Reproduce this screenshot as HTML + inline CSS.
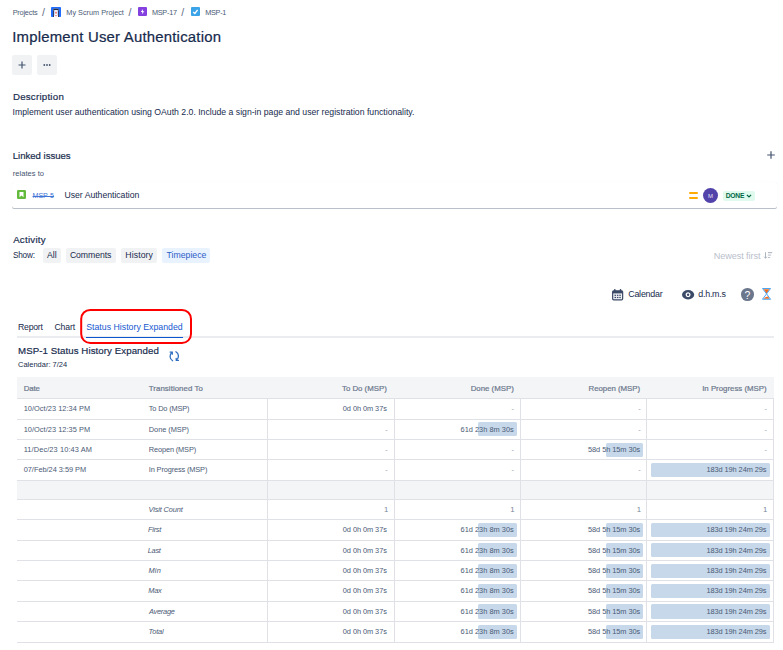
<!DOCTYPE html>
<html><head><meta charset="utf-8"><title>MSP-1</title>
<style>
*{box-sizing:border-box;margin:0;padding:0}
html,body{width:783px;height:650px;background:#fff;overflow:hidden}
body{font-family:"Liberation Sans",sans-serif;color:#172b4d;position:relative}
.t{position:absolute;white-space:nowrap}
.b{position:absolute}
svg{position:absolute;overflow:visible}
</style></head><body>
<div class="t" style="top:8px;font-size:7.3px;line-height:9px;height:9px;color:#4c5b76;left:12.70px;letter-spacing:-0.201px;">Projects</div>
<div class="t" style="top:6px;font-size:10.6px;line-height:12px;height:12px;color:#5e6c84;left:42.00px;">/</div>
<div class="t" style="top:8px;font-size:7.3px;line-height:9px;height:9px;color:#4c5b76;left:66.30px;">My Scrum Project</div>
<div class="t" style="top:6px;font-size:10.6px;line-height:12px;height:12px;color:#5e6c84;left:128.60px;">/</div>
<div class="t" style="top:8px;font-size:7.3px;line-height:9px;height:9px;color:#4c5b76;left:151.90px;letter-spacing:-0.240px;">MSP-17</div>
<div class="t" style="top:6px;font-size:10.6px;line-height:12px;height:12px;color:#5e6c84;left:181.30px;">/</div>
<div class="t" style="top:8px;font-size:7.3px;line-height:9px;height:9px;color:#4c5b76;left:205.13px;letter-spacing:-0.250px;">MSP-1</div>
<svg style="left:51px;top:7px" width="10" height="10" viewBox="0 0 10 10"><rect width="10" height="10" rx="0.8" fill="#1f6cff"/><path d="M2 10V3.200Q2 1.600 3.600 1.600H6.400Q8 1.600 8 3.200V10Z" fill="#fff"/><path d="M2 3.600V3.200Q2 1.600 3.600 1.600H6.400Q8 1.600 8 3.200V3.600Q5 2.600 2 3.600Z" fill="#1d2b4f"/><rect x="2" y="3.400" width="0.9" height="6.600" fill="#1d2b4f"/><rect x="7.100" y="3.400" width="0.9" height="6.600" fill="#1d2b4f"/><rect x="3.100" y="4" width="0.600" height="4.500" fill="#9cc3ff"/><rect x="6.300" y="4" width="0.600" height="4.500" fill="#9cc3ff"/><circle cx="5" cy="5.700" r="1.100" fill="#f0a0a0"/><circle cx="5" cy="5.800" r="0.500" fill="#e5484d"/><rect x="4.200" y="8.300" width="1.600" height="0.800" fill="#e5484d"/></svg>
<svg style="left:137.5px;top:7.4px" width="9" height="9" viewBox="0 0 9 9"><rect width="9" height="9" rx="1.1" fill="#8540e0"/><path d="M5.100 1.900L2.700 4.900H4.300L3.900 7.300L6.400 4.200H4.800Z" fill="#fff"/></svg>
<svg style="left:190.5px;top:7.4px" width="9" height="9" viewBox="0 0 9 9"><rect width="9" height="9" rx="1.1" fill="#3ba3e8"/><path d="M2.200 4.900L3.900 6.500L6.600 2.900" stroke="#fff" stroke-width="1.400" fill="none"/></svg>
<div class="t" style="top:29px;font-size:14.9px;line-height:16px;height:16px;color:#172b4d;left:12.20px;letter-spacing:0.213px;-webkit-text-stroke:0.22px #172b4d;">Implement User Authentication</div>
<div class="b" style="left:12px;top:55px;width:20px;height:20px;background:#f1f2f4;border-radius:2px"></div>
<div class="b" style="left:37px;top:55px;width:20px;height:20px;background:#f1f2f4;border-radius:2px"></div>
<svg style="left:12px;top:55px" width="20" height="20"><path d="M6.5 10H13.5M10 6.5V13.5" stroke="#44546f" stroke-width="1.2"/></svg>
<svg style="left:37px;top:55px" width="20" height="20"><circle cx="7.3" cy="10" r="0.9" fill="#44546f"/><circle cx="10" cy="10" r="0.9" fill="#44546f"/><circle cx="12.7" cy="10" r="0.9" fill="#44546f"/></svg>
<div class="t" style="top:91px;font-size:9.7px;line-height:11px;height:11px;color:#172b4d;left:12.90px;letter-spacing:0.243px;-webkit-text-stroke:0.18px #172b4d;">Description</div>
<div class="t" style="top:107px;font-size:8.7px;line-height:10px;height:10px;color:#172b4d;left:12.60px;letter-spacing:-0.007px;">Implement user authentication using OAuth 2.0. Include a sign-in page and user registration functionality.</div>
<div class="t" style="top:150px;font-size:9.6px;line-height:11px;height:11px;color:#172b4d;left:12.80px;letter-spacing:-0.028px;-webkit-text-stroke:0.18px #172b4d;">Linked issues</div>
<svg style="left:767px;top:151px" width="8" height="8"><path d="M0.2 4H7.8M4 0.2V7.8" stroke="#44546f" stroke-width="1.2"/></svg>
<div class="t" style="top:169px;font-size:7.5px;line-height:9px;height:9px;color:#44546f;left:12.80px;letter-spacing:0.036px;">relates to</div>
<div class="b" style="left:12.4px;top:182.4px;width:764.5px;height:25.4px;background:#fff;border-radius:2px;box-shadow:0 1px 0.5px rgba(9,30,66,.27),0 0 1px rgba(9,30,66,.09)"></div>
<svg style="left:17.4px;top:190.4px" width="9" height="9" viewBox="0 0 9 9"><rect width="9" height="9" rx="1.3" fill="#63ba3c"/><path d="M2.500 1.900H6.500V7.200L4.500 5.600L2.500 7.200Z" fill="#fff"/></svg>
<div class="t" style="top:192px;font-size:7.1px;line-height:8px;height:8px;color:#3f76d6;left:32.60px;letter-spacing:-0.084px;text-decoration:line-through;">MSP-5</div>
<div class="t" style="top:190px;font-size:8.7px;line-height:10px;height:10px;color:#172b4d;left:64.50px;letter-spacing:-0.027px;">User Authentication</div>
<div class="b" style="left:688.7px;top:192px;width:9.6px;height:1.8px;background:#ffab00;border-radius:1px"></div>
<div class="b" style="left:688.7px;top:197.2px;width:9.6px;height:1.8px;background:#ffab00;border-radius:1px"></div>
<div class="b" style="left:703px;top:188px;width:15px;height:15px;background:#5243aa;border-radius:50%"></div>
<div class="t" style="top:193px;font-size:6px;line-height:6px;height:6px;color:#e6e3f5;left:708.00px;">M</div>
<div class="b" style="left:723.2px;top:191.3px;width:31.7px;height:9.4px;background:#e0fbee;border-radius:2px"></div>
<div class="t" style="top:192px;font-size:6.7px;line-height:7px;height:7px;color:#006644;left:725.70px;letter-spacing:-0.220px;font-weight:bold;">DONE</div>
<svg style="left:746.3px;top:194.4px" width="6" height="4"><path d="M0.9 0.9L3 3L5.1 0.900" stroke="#006644" stroke-width="1.2" fill="none"/></svg>
<div class="t" style="top:234px;font-size:9.7px;line-height:11px;height:11px;color:#172b4d;left:13.16px;letter-spacing:0.250px;-webkit-text-stroke:0.18px #172b4d;">Activity</div>
<div class="t" style="top:251px;font-size:8.2px;line-height:9px;height:9px;color:#172b4d;left:12.90px;letter-spacing:-0.145px;">Show:</div>
<div class="b" style="left:43px;top:248.4px;width:18px;height:14.3px;background:#f1f2f4;border-radius:2px"></div>
<div class="t" style="top:250px;font-size:8.7px;line-height:10px;height:10px;color:#172b4d;left:47.10px;letter-spacing:-0.062px;">All</div>
<div class="b" style="left:66px;top:248.4px;width:50px;height:14.3px;background:#f1f2f4;border-radius:2px"></div>
<div class="t" style="top:250px;font-size:8.7px;line-height:10px;height:10px;color:#172b4d;left:69.90px;letter-spacing:-0.079px;">Comments</div>
<div class="b" style="left:121px;top:248.4px;width:36px;height:14.3px;background:#f1f2f4;border-radius:2px"></div>
<div class="t" style="top:250px;font-size:8.7px;line-height:10px;height:10px;color:#172b4d;left:125.30px;letter-spacing:0.102px;">History</div>
<div class="b" style="left:162px;top:248.4px;width:48px;height:14.3px;background:#e9f2ff;border-radius:2px"></div>
<div class="t" style="top:250px;font-size:8.7px;line-height:10px;height:10px;color:#2c5fc7;left:166.60px;">Timepiece</div>
<div class="t" style="top:251px;font-size:9.1px;line-height:10px;height:10px;color:#b9c0cb;left:713.70px;letter-spacing:-0.061px;">Newest first</div>
<svg style="left:764px;top:251.800px" width="9" height="7.200"><path d="M1.500 0.200V6.100M0.200 4.700L1.500 6.300L2.800 4.700" stroke="#a5adba" stroke-width="0.9" fill="none"/><path d="M3.900 0.700H8.200" stroke="#a5adba" stroke-width="1" fill="none"/><path d="M3.900 3.100H7.200M3.900 5.500H6.200" stroke="#b3bac5" stroke-width="0.9" fill="none"/></svg>
<svg style="left:611.6px;top:288.7px" width="11.3" height="11.5" viewBox="0 0 11.3 11.5"><rect x="0.65" y="1.9" width="10" height="8.950" rx="1.1" fill="#eef0f4" stroke="#3b4a66" stroke-width="1.2"/><rect x="0.65" y="1.900" width="10" height="2.500" fill="#3b4a66"/><rect x="2.100" y="0" width="1.400" height="2.600" rx="0.5" fill="#3b4a66"/><rect x="7.800" y="0" width="1.400" height="2.600" rx="0.5" fill="#3b4a66"/><g fill="#3b4a66"><rect x="2.500" y="5.700" width="1.500" height="1.200"/><rect x="4.900" y="5.700" width="1.500" height="1.200"/><rect x="7.300" y="5.700" width="1.500" height="1.200"/><rect x="2.500" y="7.900" width="1.500" height="1.200"/><rect x="4.900" y="7.900" width="1.500" height="1.200"/><rect x="7.300" y="7.900" width="1.500" height="1.200"/></g></svg>
<div class="t" style="top:289px;font-size:8.9px;line-height:10px;height:10px;color:#172b4d;left:628.20px;letter-spacing:-0.209px;">Calendar</div>
<svg style="left:682.3px;top:289.7px" width="12.2" height="9.6" viewBox="0 0 12.2 9.6"><ellipse cx="6.1" cy="4.8" rx="6.1" ry="4.700" fill="#3b4a66"/><circle cx="6.1" cy="4.8" r="2.500" fill="#fff"/><circle cx="6.1" cy="4.8" r="1.200" fill="#3b4a66"/></svg>
<div class="t" style="top:289px;font-size:8.9px;line-height:10px;height:10px;color:#172b4d;left:698.32px;letter-spacing:-0.250px;">d.h.m.s</div>
<div class="b" style="left:741.1px;top:288px;width:12.7px;height:12.7px;background:#6b778c;border-radius:50%"></div>
<div class="t" style="top:290px;font-size:10.4px;line-height:11px;height:11px;color:#fff;left:744.55px;">?</div>
<svg style="left:762px;top:288.1px" width="9.1" height="11.800" viewBox="0 0 9.1 11.8"><path d="M1.500 1.200H7.600L4.550 5.600Z" fill="#f26a1b"/><path d="M1.400 10.700L3.400 9.300L5.900 8.600L7.700 10.700Z" fill="#f26a1b"/><path d="M0.500 0.500H8.600L0.500 11.300H8.600Z" stroke="#4fa6ee" stroke-width="1" fill="none" stroke-linejoin="round"/></svg>
<div class="t" style="top:322px;font-size:8.7px;line-height:10px;height:10px;color:#172b4d;left:18.00px;letter-spacing:-0.232px;">Report</div>
<div class="t" style="top:322px;font-size:8.7px;line-height:10px;height:10px;color:#172b4d;left:54.40px;letter-spacing:-0.107px;">Chart</div>
<div class="t" style="top:322px;font-size:8.75px;line-height:10px;height:10px;color:#1558d0;left:86.20px;letter-spacing:0.008px;">Status History Expanded</div>
<div class="b" style="left:16.8px;top:336px;width:757.2px;height:2px;background:#ebecf0;"></div>
<div class="b" style="left:86.2px;top:336.8px;width:96.6px;height:1.4px;background:#0b55cf;"></div>
<svg style="left:79px;top:307px" width="115" height="39"><rect x="2.2" y="2.9" width="109.8" height="33.1" rx="9" fill="none" stroke="#ff0000" stroke-width="2"/></svg>
<div class="t" style="top:345px;font-size:9.7px;line-height:11px;height:11px;color:#172b4d;left:18.00px;letter-spacing:0.070px;-webkit-text-stroke:0.18px #172b4d;">MSP-1 Status History Expanded</div>
<svg style="left:169.3px;top:351.2px" width="10.5" height="10.5" viewBox="0 0 10.5 10.5"><g stroke="#2f6dc0" stroke-width="1.3" fill="none" stroke-linecap="round"><path d="M3.600 9.700C0.500 8 0.200 3.600 2.900 1.400"/><path d="M1.100 1.100L3.200 1.100L3.300 3.200"/><path d="M6.900 0.800C10 2.500 10.300 6.900 7.600 9.100"/><path d="M9.400 9.400L7.300 9.400L7.200 7.300"/></g></svg>
<div class="t" style="top:360px;font-size:7.45px;line-height:9px;height:9px;color:#172b4d;left:18.00px;letter-spacing:0.027px;">Calendar: 7/24</div>
<div class="b" style="left:17px;top:377px;width:757px;height:21px;background:#f4f5f7;"></div>
<div class="b" style="left:17px;top:481px;width:757px;height:18px;background:#f4f5f7;"></div>
<div class="b" style="left:17px;top:398px;width:757px;height:1px;background:#dfe1e6;"></div>
<div class="b" style="left:17px;top:419px;width:757px;height:1px;background:#dfe1e6;"></div>
<div class="b" style="left:17px;top:439px;width:757px;height:1px;background:#dfe1e6;"></div>
<div class="b" style="left:17px;top:459px;width:757px;height:1px;background:#dfe1e6;"></div>
<div class="b" style="left:17px;top:480px;width:757px;height:1px;background:#dfe1e6;"></div>
<div class="b" style="left:17px;top:499px;width:757px;height:1px;background:#dfe1e6;"></div>
<div class="b" style="left:17px;top:519px;width:757px;height:1px;background:#dfe1e6;"></div>
<div class="b" style="left:17px;top:540px;width:757px;height:1px;background:#dfe1e6;"></div>
<div class="b" style="left:17px;top:560px;width:757px;height:1px;background:#dfe1e6;"></div>
<div class="b" style="left:17px;top:580px;width:757px;height:1px;background:#dfe1e6;"></div>
<div class="b" style="left:17px;top:601px;width:757px;height:1px;background:#dfe1e6;"></div>
<div class="b" style="left:17px;top:621px;width:757px;height:1px;background:#dfe1e6;"></div>
<div class="b" style="left:17px;top:642px;width:757px;height:1px;background:#dfe1e6;"></div>
<div class="b" style="left:267px;top:399px;width:1px;height:244px;background:#dfe1e6;"></div>
<div class="b" style="left:394px;top:399px;width:1px;height:244px;background:#dfe1e6;"></div>
<div class="b" style="left:520px;top:399px;width:1px;height:244px;background:#dfe1e6;"></div>
<div class="b" style="left:646px;top:399px;width:1px;height:244px;background:#dfe1e6;"></div>
<div class="b" style="left:773px;top:399px;width:1px;height:244px;background:#dfe1e6;"></div>
<div class="t" style="top:384px;font-size:7.85px;line-height:9px;height:9px;color:#6b778c;left:23.70px;letter-spacing:-0.135px;-webkit-text-stroke:0.2px #6b778c;">Date</div>
<div class="t" style="top:384px;font-size:7.85px;line-height:9px;height:9px;color:#6b778c;left:148.80px;letter-spacing:0.059px;-webkit-text-stroke:0.2px #6b778c;">Transitioned To</div>
<div class="t" style="top:384px;font-size:7.85px;line-height:9px;height:9px;color:#6b778c;left:342.00px;letter-spacing:-0.008px;-webkit-text-stroke:0.2px #6b778c;">To Do (MSP)</div>
<div class="t" style="top:384px;font-size:7.85px;line-height:9px;height:9px;color:#6b778c;left:470.70px;-webkit-text-stroke:0.2px #6b778c;">Done (MSP)</div>
<div class="t" style="top:384px;font-size:7.85px;line-height:9px;height:9px;color:#6b778c;left:588.50px;letter-spacing:-0.024px;-webkit-text-stroke:0.2px #6b778c;">Reopen (MSP)</div>
<div class="t" style="top:384px;font-size:7.85px;line-height:9px;height:9px;color:#6b778c;left:702.20px;letter-spacing:-0.006px;-webkit-text-stroke:0.2px #6b778c;">In Progress (MSP)</div>
<div class="t" style="top:404px;font-size:7.4px;line-height:9px;height:9px;color:#4a5a75;left:23.70px;letter-spacing:0.037px;">10/Oct/23 12:34 PM</div>
<div class="t" style="top:404px;font-size:7.4px;line-height:9px;height:9px;color:#4a5a75;left:148.80px;letter-spacing:-0.164px;">To Do (MSP)</div>
<div class="t" style="top:404px;font-size:7.4px;line-height:9px;height:9px;color:#4a5a75;left:342.80px;letter-spacing:-0.063px;">0d 0h 0m 37s</div>
<div class="t" style="top:404px;font-size:7.4px;line-height:9px;height:9px;color:#97a0af;left:511.60px;">-</div>
<div class="t" style="top:404px;font-size:7.4px;line-height:9px;height:9px;color:#97a0af;left:638.20px;">-</div>
<div class="t" style="top:404px;font-size:7.4px;line-height:9px;height:9px;color:#97a0af;left:764.60px;">-</div>
<div class="t" style="top:425px;font-size:7.4px;line-height:9px;height:9px;color:#4a5a75;left:23.70px;letter-spacing:0.037px;">10/Oct/23 12:35 PM</div>
<div class="t" style="top:425px;font-size:7.4px;line-height:9px;height:9px;color:#4a5a75;left:148.80px;letter-spacing:-0.055px;">Done (MSP)</div>
<div class="t" style="top:425px;font-size:7.4px;line-height:9px;height:9px;color:#97a0af;left:385.20px;">-</div>
<div class="b" style="left:478px;top:422px;width:39px;height:14px;background:#c6d8ea;border-radius:1.5px"></div>
<div class="t" style="top:425px;font-size:7.4px;line-height:9px;height:9px;color:#4a5a75;left:460.60px;letter-spacing:0.007px;">61d 23h 8m 30s</div>
<div class="t" style="top:425px;font-size:7.4px;line-height:9px;height:9px;color:#97a0af;left:638.20px;">-</div>
<div class="t" style="top:425px;font-size:7.4px;line-height:9px;height:9px;color:#97a0af;left:764.60px;">-</div>
<div class="t" style="top:445px;font-size:7.4px;line-height:9px;height:9px;color:#4a5a75;left:23.70px;letter-spacing:0.107px;">11/Dec/23 10:43 AM</div>
<div class="t" style="top:445px;font-size:7.4px;line-height:9px;height:9px;color:#4a5a75;left:148.80px;letter-spacing:-0.138px;">Reopen (MSP)</div>
<div class="t" style="top:445px;font-size:7.4px;line-height:9px;height:9px;color:#97a0af;left:385.20px;">-</div>
<div class="t" style="top:445px;font-size:7.4px;line-height:9px;height:9px;color:#97a0af;left:511.60px;">-</div>
<div class="b" style="left:606px;top:443px;width:37px;height:14px;background:#c6d8ea;border-radius:1.5px"></div>
<div class="t" style="top:445px;font-size:7.4px;line-height:9px;height:9px;color:#4a5a75;left:588.00px;letter-spacing:-0.062px;">58d 5h 15m 30s</div>
<div class="t" style="top:445px;font-size:7.4px;line-height:9px;height:9px;color:#97a0af;left:764.60px;">-</div>
<div class="t" style="top:465px;font-size:7.4px;line-height:9px;height:9px;color:#4a5a75;left:23.70px;letter-spacing:-0.025px;">07/Feb/24 3:59 PM</div>
<div class="t" style="top:465px;font-size:7.4px;line-height:9px;height:9px;color:#4a5a75;left:148.80px;letter-spacing:-0.139px;">In Progress (MSP)</div>
<div class="t" style="top:465px;font-size:7.4px;line-height:9px;height:9px;color:#97a0af;left:385.20px;">-</div>
<div class="t" style="top:465px;font-size:7.4px;line-height:9px;height:9px;color:#97a0af;left:511.60px;">-</div>
<div class="t" style="top:465px;font-size:7.4px;line-height:9px;height:9px;color:#97a0af;left:638.20px;">-</div>
<div class="b" style="left:651px;top:463px;width:119px;height:13.5px;background:#c6d8ea;border-radius:1.5px"></div>
<div class="t" style="top:465px;font-size:7.4px;line-height:9px;height:9px;color:#4a5a75;left:706.40px;letter-spacing:-0.075px;">183d 19h 24m 29s</div>
<div class="t" style="top:505px;font-size:7.4px;line-height:9px;height:9px;color:#4a5a75;left:148.50px;letter-spacing:-0.135px;font-style:italic;">Visit Count</div>
<div class="t" style="top:505px;font-size:7.8px;line-height:9px;height:9px;color:#7a869a;left:383.90px;">1</div>
<div class="t" style="top:505px;font-size:7.8px;line-height:9px;height:9px;color:#7a869a;left:510.30px;">1</div>
<div class="t" style="top:505px;font-size:7.8px;line-height:9px;height:9px;color:#7a869a;left:636.70px;">1</div>
<div class="t" style="top:505px;font-size:7.8px;line-height:9px;height:9px;color:#7a869a;left:763.10px;">1</div>
<div class="t" style="top:525px;font-size:7.4px;line-height:9px;height:9px;color:#4a5a75;left:147.99px;letter-spacing:-0.250px;font-style:italic;">First</div>
<div class="t" style="top:525px;font-size:7.4px;line-height:9px;height:9px;color:#4a5a75;left:342.80px;letter-spacing:-0.063px;">0d 0h 0m 37s</div>
<div class="b" style="left:478px;top:523px;width:39px;height:14px;background:#c6d8ea;border-radius:1.5px"></div>
<div class="t" style="top:525px;font-size:7.4px;line-height:9px;height:9px;color:#4a5a75;left:460.60px;letter-spacing:0.007px;">61d 23h 8m 30s</div>
<div class="b" style="left:606px;top:523px;width:37px;height:14px;background:#c6d8ea;border-radius:1.5px"></div>
<div class="t" style="top:525px;font-size:7.4px;line-height:9px;height:9px;color:#4a5a75;left:588.00px;letter-spacing:-0.062px;">58d 5h 15m 30s</div>
<div class="b" style="left:651px;top:523px;width:119px;height:14px;background:#c6d8ea;border-radius:1.5px"></div>
<div class="t" style="top:525px;font-size:7.4px;line-height:9px;height:9px;color:#4a5a75;left:706.40px;letter-spacing:-0.075px;">183d 19h 24m 29s</div>
<div class="t" style="top:546px;font-size:7.4px;line-height:9px;height:9px;color:#4a5a75;left:147.67px;letter-spacing:-0.250px;font-style:italic;">Last</div>
<div class="t" style="top:546px;font-size:7.4px;line-height:9px;height:9px;color:#4a5a75;left:342.80px;letter-spacing:-0.063px;">0d 0h 0m 37s</div>
<div class="b" style="left:478px;top:543px;width:39px;height:14px;background:#c6d8ea;border-radius:1.5px"></div>
<div class="t" style="top:546px;font-size:7.4px;line-height:9px;height:9px;color:#4a5a75;left:460.60px;letter-spacing:0.007px;">61d 23h 8m 30s</div>
<div class="b" style="left:606px;top:543px;width:37px;height:14px;background:#c6d8ea;border-radius:1.5px"></div>
<div class="t" style="top:546px;font-size:7.4px;line-height:9px;height:9px;color:#4a5a75;left:588.00px;letter-spacing:-0.062px;">58d 5h 15m 30s</div>
<div class="b" style="left:651px;top:543px;width:119px;height:14px;background:#c6d8ea;border-radius:1.5px"></div>
<div class="t" style="top:546px;font-size:7.4px;line-height:9px;height:9px;color:#4a5a75;left:706.40px;letter-spacing:-0.075px;">183d 19h 24m 29s</div>
<div class="t" style="top:566px;font-size:7.4px;line-height:9px;height:9px;color:#4a5a75;left:148.50px;letter-spacing:0.201px;font-style:italic;">Min</div>
<div class="t" style="top:566px;font-size:7.4px;line-height:9px;height:9px;color:#4a5a75;left:342.80px;letter-spacing:-0.063px;">0d 0h 0m 37s</div>
<div class="b" style="left:478px;top:564px;width:39px;height:14px;background:#c6d8ea;border-radius:1.5px"></div>
<div class="t" style="top:566px;font-size:7.4px;line-height:9px;height:9px;color:#4a5a75;left:460.60px;letter-spacing:0.007px;">61d 23h 8m 30s</div>
<div class="b" style="left:606px;top:564px;width:37px;height:14px;background:#c6d8ea;border-radius:1.5px"></div>
<div class="t" style="top:566px;font-size:7.4px;line-height:9px;height:9px;color:#4a5a75;left:588.00px;letter-spacing:-0.062px;">58d 5h 15m 30s</div>
<div class="b" style="left:651px;top:564px;width:119px;height:14px;background:#c6d8ea;border-radius:1.5px"></div>
<div class="t" style="top:566px;font-size:7.4px;line-height:9px;height:9px;color:#4a5a75;left:706.40px;letter-spacing:-0.075px;">183d 19h 24m 29s</div>
<div class="t" style="top:586px;font-size:7.4px;line-height:9px;height:9px;color:#4a5a75;left:148.27px;letter-spacing:-0.250px;font-style:italic;">Max</div>
<div class="t" style="top:586px;font-size:7.4px;line-height:9px;height:9px;color:#4a5a75;left:342.80px;letter-spacing:-0.063px;">0d 0h 0m 37s</div>
<div class="b" style="left:478px;top:584px;width:39px;height:14px;background:#c6d8ea;border-radius:1.5px"></div>
<div class="t" style="top:586px;font-size:7.4px;line-height:9px;height:9px;color:#4a5a75;left:460.60px;letter-spacing:0.007px;">61d 23h 8m 30s</div>
<div class="b" style="left:606px;top:584px;width:37px;height:14px;background:#c6d8ea;border-radius:1.5px"></div>
<div class="t" style="top:586px;font-size:7.4px;line-height:9px;height:9px;color:#4a5a75;left:588.00px;letter-spacing:-0.062px;">58d 5h 15m 30s</div>
<div class="b" style="left:651px;top:584px;width:119px;height:14px;background:#c6d8ea;border-radius:1.5px"></div>
<div class="t" style="top:586px;font-size:7.4px;line-height:9px;height:9px;color:#4a5a75;left:706.40px;letter-spacing:-0.075px;">183d 19h 24m 29s</div>
<div class="t" style="top:607px;font-size:7.4px;line-height:9px;height:9px;color:#4a5a75;left:149.01px;letter-spacing:-0.250px;font-style:italic;">Average</div>
<div class="t" style="top:607px;font-size:7.4px;line-height:9px;height:9px;color:#4a5a75;left:342.80px;letter-spacing:-0.063px;">0d 0h 0m 37s</div>
<div class="b" style="left:478px;top:604px;width:39px;height:15px;background:#c6d8ea;border-radius:1.5px"></div>
<div class="t" style="top:607px;font-size:7.4px;line-height:9px;height:9px;color:#4a5a75;left:460.60px;letter-spacing:0.007px;">61d 23h 8m 30s</div>
<div class="b" style="left:606px;top:604px;width:37px;height:15px;background:#c6d8ea;border-radius:1.5px"></div>
<div class="t" style="top:607px;font-size:7.4px;line-height:9px;height:9px;color:#4a5a75;left:588.00px;letter-spacing:-0.062px;">58d 5h 15m 30s</div>
<div class="b" style="left:651px;top:604px;width:119px;height:15px;background:#c6d8ea;border-radius:1.5px"></div>
<div class="t" style="top:607px;font-size:7.4px;line-height:9px;height:9px;color:#4a5a75;left:706.40px;letter-spacing:-0.075px;">183d 19h 24m 29s</div>
<div class="t" style="top:627px;font-size:7.4px;line-height:9px;height:9px;color:#4a5a75;left:148.50px;letter-spacing:-0.152px;font-style:italic;">Total</div>
<div class="t" style="top:627px;font-size:7.4px;line-height:9px;height:9px;color:#4a5a75;left:342.80px;letter-spacing:-0.063px;">0d 0h 0m 37s</div>
<div class="b" style="left:478px;top:625px;width:39px;height:14px;background:#c6d8ea;border-radius:1.5px"></div>
<div class="t" style="top:627px;font-size:7.4px;line-height:9px;height:9px;color:#4a5a75;left:460.60px;letter-spacing:0.007px;">61d 23h 8m 30s</div>
<div class="b" style="left:606px;top:625px;width:37px;height:14px;background:#c6d8ea;border-radius:1.5px"></div>
<div class="t" style="top:627px;font-size:7.4px;line-height:9px;height:9px;color:#4a5a75;left:588.00px;letter-spacing:-0.062px;">58d 5h 15m 30s</div>
<div class="b" style="left:651px;top:625px;width:119px;height:14px;background:#c6d8ea;border-radius:1.5px"></div>
<div class="t" style="top:627px;font-size:7.4px;line-height:9px;height:9px;color:#4a5a75;left:706.40px;letter-spacing:-0.075px;">183d 19h 24m 29s</div>
</body></html>
